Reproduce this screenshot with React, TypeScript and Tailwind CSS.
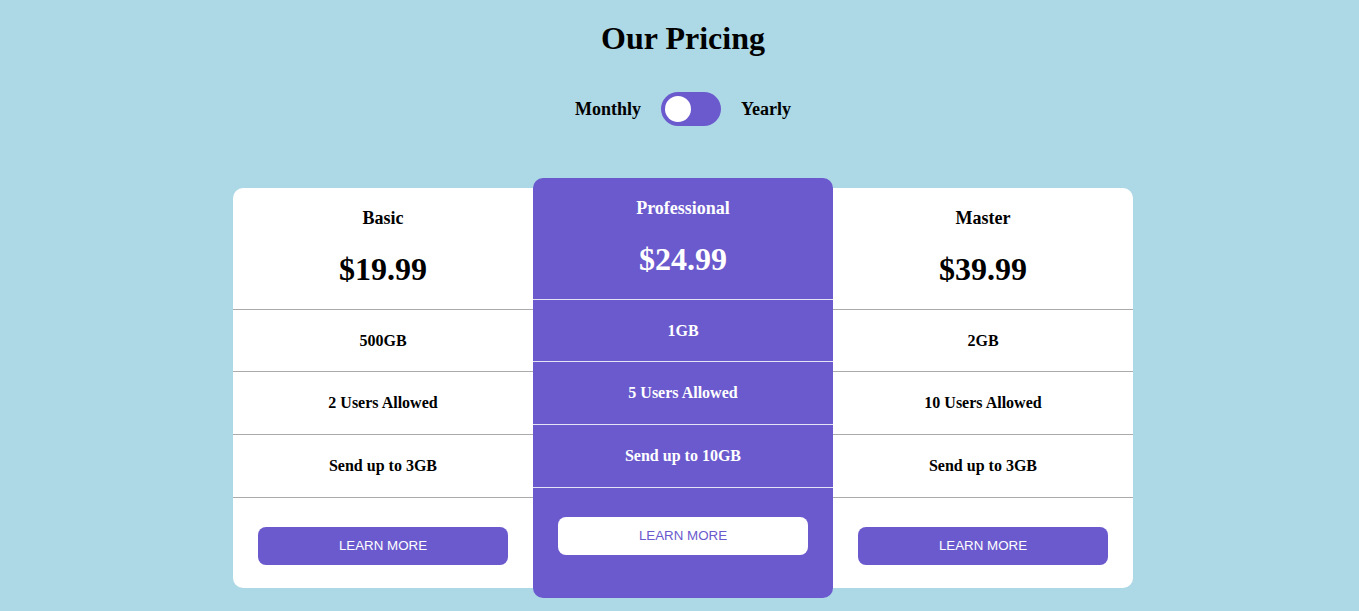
import React, { useState } from 'react'

interface Plan {
    name: string
    price: string
    storage: string
    users: string
    send: string
    featured?: boolean
}

const plans: Plan[] = [
    { name: 'Basic', price: '$19.99', storage: '500GB', users: '2 Users Allowed', send: 'Send up to 3GB' },
    { name: 'Professional', price: '$24.99', storage: '1GB', users: '5 Users Allowed', send: 'Send up to 10GB', featured: true },
    { name: 'Master', price: '$39.99', storage: '2GB', users: '10 Users Allowed', send: 'Send up to 3GB' },
]

const serif = "font-['Liberation_Serif','Times_New_Roman',serif]"
const rowHeights = ['h-[62px]', 'h-[63px]', 'h-[63px]']

const PlanCard: React.FC<{ plan: Plan; position: 'left' | 'middle' | 'right' }> = ({ plan, position }) => {
    const featured = !!plan.featured
    const rounding =
        position === 'left' ? 'rounded-l-[10px]' : position === 'right' ? 'rounded-r-[10px]' : 'rounded-[10px]'
    const line = featured ? 'border-[#e4e2f4]' : 'border-[#ababab]'

    return (
        <div
            className={`w-[300px] flex flex-col ${rounding} ${
                featured ? 'h-[420px] bg-[#6a5acd] text-white relative z-10' : 'h-[400px] bg-white text-black'
            }`}
        >
            <div className={`h-[122px] flex flex-col items-center border-b ${line}`}>
                <h3 className="mt-[20px] text-[18px] leading-[20px] font-bold">{plan.name}</h3>
                <div className="mt-[23px] text-[32px] leading-[36px] font-bold">{plan.price}</div>
            </div>
            {[plan.storage, plan.users, plan.send].map((feature, i) => (
                <div
                    key={feature}
                    className={`${rowHeights[i]} flex items-center justify-center border-b ${line} text-[16px] font-bold`}
                >
                    {feature}
                </div>
            ))}
            <div className="flex justify-center pt-[29px]">
                <button
                    className={`w-[250px] h-[38px] rounded-[8px] font-['Liberation_Sans',Arial,sans-serif] text-[13.33px] uppercase ${
                        featured ? 'bg-white text-[#6a5acd]' : 'bg-[#6a5acd] text-white'
                    }`}
                >
                    Learn More
                </button>
            </div>
        </div>
    )
}

export default function App() {
    const [yearly, setYearly] = useState(false)

    return (
        <div className={`min-h-screen bg-[#add8e6] pl-[7px] ${serif} text-black`}>
            <h1 className="pt-[20px] text-center text-[32px] leading-[36px] font-bold">Our Pricing</h1>

            <div className="mt-[36px] flex items-center justify-center gap-[20px] text-[18px] font-bold">
                <span>Monthly</span>
                <button
                    onClick={() => setYearly(!yearly)}
                    className="w-[60px] h-[34px] rounded-full bg-[#6a5acd] p-[4px] flex items-center"
                >
                    <span
                        className={`block w-[26px] h-[26px] rounded-full bg-white transition-transform ${
                            yearly ? 'translate-x-[26px]' : ''
                        }`}
                    />
                </button>
                <span>Yearly</span>
            </div>

            <div className="mt-[52px] flex items-center justify-center">
                {plans.map((plan, i) => (
                    <PlanCard key={plan.name} plan={plan} position={i === 0 ? 'left' : i === 2 ? 'right' : 'middle'} />
                ))}
            </div>
        </div>
    )
}
